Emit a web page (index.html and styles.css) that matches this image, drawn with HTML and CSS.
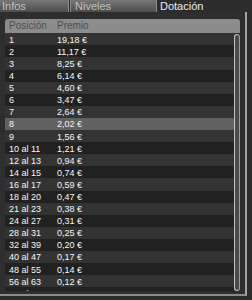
FILE: index.html
```html
<!DOCTYPE html>
<html lang="es">
<head>
<meta charset="utf-8">
<title>Dotación</title>
<link rel="stylesheet" href="styles.css">
</head>
<body>
<div class="tabs">
  <div class="tab tab-infos">Infos</div>
  <div class="tab tab-niveles">Niveles</div>
  <div class="tab tab-active">Dotación</div>
</div>
<div class="panel">
  <div class="head">
    <span class="c-pos">Posición</span>
    <span class="c-prize">Premio</span>
  </div>
  <div class="body">
    <div class="rows">
      <div class="row"><span class="c-pos">1</span><span class="c-prize">19,18 €</span></div>
      <div class="row"><span class="c-pos">2</span><span class="c-prize">11,17 €</span></div>
      <div class="row"><span class="c-pos">3</span><span class="c-prize">8,25 €</span></div>
      <div class="row"><span class="c-pos">4</span><span class="c-prize">6,14 €</span></div>
      <div class="row"><span class="c-pos">5</span><span class="c-prize">4,60 €</span></div>
      <div class="row"><span class="c-pos">6</span><span class="c-prize">3,47 €</span></div>
      <div class="row"><span class="c-pos">7</span><span class="c-prize">2,64 €</span></div>
      <div class="row selected"><span class="c-pos">8</span><span class="c-prize">2,02 €</span></div>
      <div class="row"><span class="c-pos">9</span><span class="c-prize">1,56 €</span></div>
      <div class="row"><span class="c-pos">10 al 11</span><span class="c-prize">1,21 €</span></div>
      <div class="row"><span class="c-pos">12 al 13</span><span class="c-prize">0,94 €</span></div>
      <div class="row"><span class="c-pos">14 al 15</span><span class="c-prize">0,74 €</span></div>
      <div class="row"><span class="c-pos">16 al 17</span><span class="c-prize">0,59 €</span></div>
      <div class="row"><span class="c-pos">18 al 20</span><span class="c-prize">0,47 €</span></div>
      <div class="row"><span class="c-pos">21 al 23</span><span class="c-prize">0,38 €</span></div>
      <div class="row"><span class="c-pos">24 al 27</span><span class="c-prize">0,31 €</span></div>
      <div class="row"><span class="c-pos">28 al 31</span><span class="c-prize">0,25 €</span></div>
      <div class="row"><span class="c-pos">32 al 39</span><span class="c-prize">0,20 €</span></div>
      <div class="row"><span class="c-pos">40 al 47</span><span class="c-prize">0,17 €</span></div>
      <div class="row"><span class="c-pos">48 al 55</span><span class="c-prize">0,14 €</span></div>
      <div class="row"><span class="c-pos">56 al 63</span><span class="c-prize">0,12 €</span></div>
      <div class="row"><span class="c-pos">64 al 71</span><span class="c-prize">0,10 €</span></div>
    </div>
    <div class="scrollbar"><div class="thumb"></div></div>
  </div>
</div>
</body>
</html>
```
FILE: styles.css
```css
html, body {
  margin: 0;
  padding: 0;
}
body {
  width: 252px;
  height: 300px;
  overflow: hidden;
  background: #2c2c2c;
  font-family: "Liberation Sans Narrow", "Liberation Sans", Arial, sans-serif;
}
.tabs {
  display: flex;
  height: 12px;
}
.tab {
  box-sizing: border-box;
  height: 12px;
  line-height: 12px;
  font-size: 11px;
  color: #c2c2c2;
  padding-left: 2px;
  background: linear-gradient(#777777, #4c4c4c);
  border-right: 1px solid #8e8e8e;
  white-space: nowrap;
  overflow: hidden;
}
.tab-infos {
  width: 69px;
}
.tab-niveles {
  width: 87px;
  margin-left: 1px;
  padding-left: 4px;
  border-left: 1px solid #8a8a8a;
}
.tab-active {
  flex: 1;
  background: #2c2c2c;
  color: #ececec;
  border-right: none;
  padding-left: 3px;
}
.panel {
  box-sizing: border-box;
  width: 247px;
  height: 284px;
  padding: 7px 5px 3px 5px;
  border-right: 2px solid #a2a2a2;
  border-bottom: 2px solid #8a8a8a;
  display: flex;
  flex-direction: column;
  background: #2e2e2e;
}
.head {
  display: flex;
  height: 14.3px;
  line-height: 14.3px;
  font-size: 10px;
  color: #4e4e4e;
  background: #8c8c8c;
  border-radius: 3px 3px 0 0;
  flex: none;
}
.c-pos {
  width: 52px;
  padding-left: 4px;
  box-sizing: border-box;
  flex: none;
  white-space: nowrap;
}
.c-prize {
  white-space: nowrap;
}
.body {
  flex: 1;
  display: flex;
  min-height: 0;
}
.rows {
  flex: 1;
  overflow: hidden;
}
.row {
  display: flex;
  box-sizing: border-box;
  height: 12.1px;
  padding-top: 1.5px;
  line-height: 10.6px;
  font-size: 9px;
  color: #f6f6f6;
  background: #333333;
}
.row:nth-child(even) {
  background: #212121;
}
.row.selected {
  background: #616161;
}
.scrollbar {
  width: 6px;
  flex: none;
  padding-top: 1px;
  display: flex;
  background: #2a2a2a;
}
.thumb {
  flex: 1;
  box-sizing: border-box;
  border: 1px solid #c4c4c4;
  border-right-color: #9c9c9c;
  border-radius: 3px;
  background: #4c4c4c;
}
```
